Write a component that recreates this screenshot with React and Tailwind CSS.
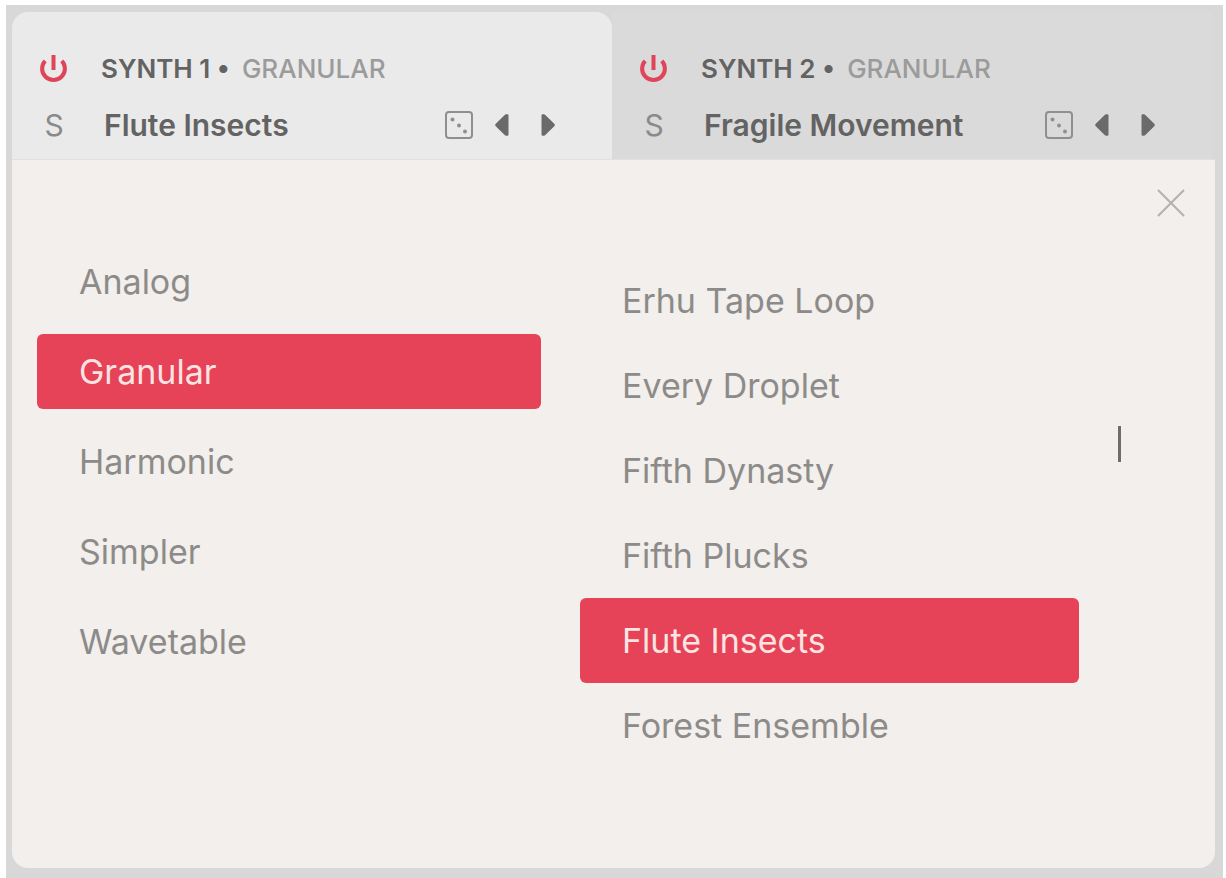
import { useState } from "react";

const ENGINES = ["Analog", "Granular", "Harmonic", "Simpler", "Wavetable"];

const PRESETS = [
  "Erhu Tape Loop",
  "Every Droplet",
  "Fifth Dynasty",
  "Fifth Plucks",
  "Flute Insects",
  "Forest Ensemble",
];

const SYNTHS = [
  { id: 1, title: "SYNTH 1", engine: "GRANULAR", preset: "Flute Insects" },
  { id: 2, title: "SYNTH 2", engine: "GRANULAR", preset: "Fragile Movement" },
];

const PowerIcon = () => (
  <svg width="30" height="30" viewBox="0 0 30 30" fill="none" stroke="currentColor" strokeWidth="4">
    <path d="M6.2 6.8A11.4 11.4 0 1 0 22.8 6.8" />
    <line x1="14.5" y1="1" x2="14.5" y2="16" />
  </svg>
);

const DiceIcon = () => (
  <svg width="28" height="28" viewBox="0 0 28 28" fill="none" stroke="currentColor" strokeWidth="2">
    <rect x="1" y="1" width="26" height="26" rx="3" />
    <circle cx="7.5" cy="8.5" r="2" fill="currentColor" stroke="none" />
    <circle cx="14" cy="14.5" r="2" fill="currentColor" stroke="none" />
    <circle cx="20" cy="20.5" r="2" fill="currentColor" stroke="none" />
  </svg>
);

const PrevIcon = () => (
  <svg width="14" height="22" viewBox="0 0 14 22" fill="currentColor">
    <path d="M13.5 1.5v19a1.2 1.2 0 0 1-1.2 1.2h-1.2a2 2 0 0 1-1.4-.6L1 12.5a2 2 0 0 1 0-3L9.700 .9a2 2 0 0 1 1.4-.6h1.200a1.200 1.200 0 0 1 1.200 1.200z" />
  </svg>
);

const NextIcon = () => (
  <svg width="14" height="22" viewBox="0 0 14 22" fill="currentColor">
    <path d="M.5 1.500v19a1.200 1.200 0 0 0 1.200 1.200h1.200a2 2 0 0 0 1.400-.6L13 12.500a2 2 0 0 0 0-3L4.300 .9a2 2 0 0 0-1.400-.6H1.700A1.200 1.200 0 0 0 .5 1.500z" />
  </svg>
);

const CloseIcon = () => (
  <svg width="28" height="28" viewBox="0 0 28 28" fill="none" stroke="currentColor" strokeWidth="2">
    <path d="M1 1l26 26M27 1L1 27" />
  </svg>
);

const SynthTab = ({ synth, active }) => (
  <section
    aria-label={synth.title}
    className={`flex flex-1 flex-col gap-6 pt-[41px] pb-[18px] pl-[27px] pr-[57px] ${
      active ? "rounded-t-2xl bg-[#eaeaea]" : "bg-[#dadada]"
    }`}
  >
    {/* Power + engine name */}
    <div className="flex h-8 items-center gap-8">
      <button type="button" aria-label={`Toggle ${synth.title}`} className="text-[#e04458]">
        <PowerIcon />
      </button>
      <h2 className="flex items-center gap-3 text-[26px] leading-8 whitespace-nowrap">
        <span className="font-semibold text-[#636363]">{synth.title} •</span>
        <span className="font-medium text-[#9b9b9b]">{synth.engine}</span>
      </h2>
    </div>

    {/* Solo + preset switcher */}
    <div className="flex h-8 items-center">
      <button type="button" aria-label={`Solo ${synth.title}`} className="w-[30px] text-[30px] leading-8 text-[#8a8a8a]">
        S
      </button>
      <span className="ml-[35px] flex-1 text-[30px] leading-8 font-semibold whitespace-nowrap text-[#636363]">
        {synth.preset}
      </span>
      <button type="button" aria-label="Random preset" className="text-[#8f8f8f]">
        <DiceIcon />
      </button>
      <button type="button" aria-label="Previous preset" className="ml-[22px] text-[#6a6a6a]">
        <PrevIcon />
      </button>
      <button type="button" aria-label="Next preset" className="ml-8 text-[#6a6a6a]">
        <NextIcon />
      </button>
    </div>
  </section>
);

const ListItem = ({ label, selected, onSelect, size }) => (
  <li>
    <button
      type="button"
      aria-pressed={selected}
      onClick={onSelect}
      className={`w-full rounded-md pl-[42px] text-left text-[34px] leading-10 ${size} ${
        selected ? "bg-[#e64258] text-[#fbe4e2]" : "text-[#8d8b89]"
      }`}
    >
      {label}
    </button>
  </li>
);

const App = () => {
  const [engine, setEngine] = useState("Granular");
  const [preset, setPreset] = useState("Flute Insects");

  return (
    <div className="flex min-h-screen flex-col bg-white pt-[5px] pr-[3px] pl-1.5 font-[Inter,sans-serif]">
      <main className="flex flex-1 flex-col bg-[#d8d8d8] pt-[7px] pr-2 pb-2.5 pl-1.5">
        <header className="flex pr-[3px]">
          {SYNTHS.map((synth) => (
            <SynthTab key={synth.id} synth={synth} active={synth.id === 1} />
          ))}
        </header>

        {/* Browser panel */}
        <div className="flex-1 rounded-b-2xl border-t border-[#e3dfdc] bg-[#f2efec] pb-12">
          <div className="flex justify-end pt-[29px] pr-[30px]">
            <button type="button" aria-label="Close browser" className="text-[#b3b0ae]">
              <CloseIcon />
            </button>
          </div>

          <div className="grid grid-cols-[504fr_499fr_auto] gap-x-[39px] pr-[94px] pl-[25px]">
            <ul className="flex flex-col gap-[15px] pt-[27px]">
              {ENGINES.map((name) => (
                <ListItem
                  key={name}
                  label={name}
                  size="h-[75px]"
                  selected={name === engine}
                  onSelect={() => setEngine(name)}
                />
              ))}
            </ul>
            <ul className="flex flex-col pt-[41px]">
              {PRESETS.map((name) => (
                <ListItem
                  key={name}
                  label={name}
                  size="h-[85px]"
                  selected={name === preset}
                  onSelect={() => setPreset(name)}
                />
              ))}
            </ul>
            {/* Scroll position */}
            <div className="pt-[209px]">
              <div className="h-9 w-[3px] bg-[#6f6d6c]" />
            </div>
          </div>
        </div>
      </main>
    </div>
  );
};

export default App;
